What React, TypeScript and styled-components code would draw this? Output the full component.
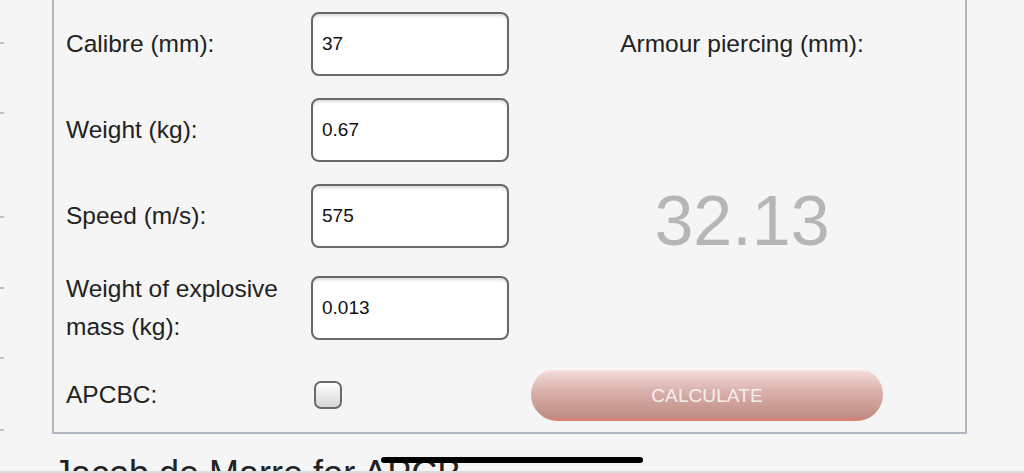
import React from "react";
import styled, { createGlobalStyle } from "styled-components";

const GlobalStyle = createGlobalStyle`
  html, body {
    margin: 0;
    padding: 0;
    background: #f5f5f5;
    overflow: hidden;
  }
  body {
    font-family: "Liberation Sans", Arial, Helvetica, sans-serif;
    color: #222;
  }
`;

const Page = styled.div`
  position: relative;
  width: 1024px;
  height: 473px;
  overflow: hidden;
  background: #f5f5f5;
  display: flex;
  flex-direction: row;
`;

const Rail = styled.div`
  width: 52px;
  flex: none;
  display: flex;
  flex-direction: column;
`;

const Tick = styled.div<{ $top: number }>`
  width: 4px;
  height: 2px;
  background: #b8c0cc;
  margin-top: ${(p) => p.$top}px;
`;

const Main = styled.div`
  display: flex;
  flex-direction: column;
  width: 915px;
`;

const Panel = styled.div`
  border: 2px solid #b0b6c1;
  border-top: none;
  padding: 12px 12px 11px 12px;
  display: grid;
  grid-template-columns: 245px 220px 1fr;
  grid-template-rows: 64px 64px 64px 76px 53px;
  row-gap: 22px;
  align-items: center;
`;

const Label = styled.div<{ $row: number }>`
  grid-column: 1;
  grid-row: ${(p) => p.$row};
  font-size: 24.5px;
  line-height: 38px;
  color: #222;
`;

const NumberInput = styled.input<{ $row: number }>`
  grid-column: 2;
  grid-row: ${(p) => p.$row};
  box-sizing: border-box;
  width: 198px;
  height: 64px;
  border: 2px solid #686868;
  border-radius: 8px;
  background: #fff;
  box-shadow: inset 0 3px 3px -1px rgba(0, 0, 0, 0.14);
  padding: 0 0 0 9px;
  font-family: "Liberation Sans", Arial, sans-serif;
  font-size: 19px;
  color: #111;
  outline: none;
`;

const Check = styled.span<{ $row: number }>`
  grid-column: 2;
  grid-row: ${(p) => p.$row};
  box-sizing: border-box;
  display: block;
  width: 28px;
  height: 28px;
  margin-left: 3px;
  border: 2px solid #6a6a6a;
  border-radius: 7px;
  background: linear-gradient(#ffffff, #d6d6d6);
`;

const ResultTitle = styled.div`
  grid-column: 3;
  grid-row: 1;
  text-align: center;
  font-size: 24.5px;
  color: #222;
`;

const ResultValue = styled.div`
  grid-column: 3;
  grid-row: 2 / 5;
  text-align: center;
  font-size: 70px;
  line-height: 70px;
  color: #b6b6b6;
  margin-top: -2px;
`;

const CalcButton = styled.button`
  grid-column: 3;
  grid-row: 5;
  box-sizing: border-box;
  width: 352px;
  height: 53px;
  border: none;
  border-radius: 27px;
  background: linear-gradient(
    #ffffff 0px,
    #f1d9d5 4px,
    #d9b0aa 45%,
    #bf8d86 92%,
    #e27e70 100%
  );
  color: #f6eeec;
  font-family: "Liberation Sans", Arial, sans-serif;
  font-size: 19px;
  letter-spacing: 0.1px;
  padding: 2px 0 0 0;
  cursor: pointer;
`;

const Caption = styled.h2`
  margin: 19px 0 0 1px;
  font-size: 36px;
  font-weight: normal;
  color: #222;
  white-space: nowrap;
`;

const HomeIndicator = styled.div`
  position: absolute;
  left: 381px;
  top: 457px;
  width: 262px;
  height: 6px;
  border-radius: 3px;
  background: #000;
`;

const BottomEdge = styled.div`
  position: absolute;
  left: 0;
  right: 0;
  bottom: 0;
  height: 2px;
  background: #dcdcdc;
`;

const rows: { label: string; value: string }[] = [
  { label: "Calibre (mm):", value: "37" },
  { label: "Weight (kg):", value: "0.67" },
  { label: "Speed (m/s):", value: "575" },
  { label: "Weight of explosive mass (kg):", value: "0.013" },
];

const tickGaps = [42, 68, 102, 69, 68, 70];

export default function App() {
  return (
    <>
      <GlobalStyle />
      <Page>
        <Rail>
          {tickGaps.map((g, i) => (
            <Tick key={i} $top={g} />
          ))}
        </Rail>
        <Main>
          <Panel>
            {rows.map((r, i) => (
              <React.Fragment key={r.label}>
                <Label $row={i + 1}>{r.label}</Label>
                <NumberInput $row={i + 1} defaultValue={r.value} />
              </React.Fragment>
            ))}
            <ResultTitle>Armour piercing (mm):</ResultTitle>
            <ResultValue>32.13</ResultValue>
            <Label $row={5}>APCBC:</Label>
            <Check $row={5} />
            <CalcButton>CALCULATE</CalcButton>
          </Panel>
          <Caption>Jacob de Marre for APCB</Caption>
        </Main>
        <HomeIndicator />
        <BottomEdge />
      </Page>
    </>
  );
}
